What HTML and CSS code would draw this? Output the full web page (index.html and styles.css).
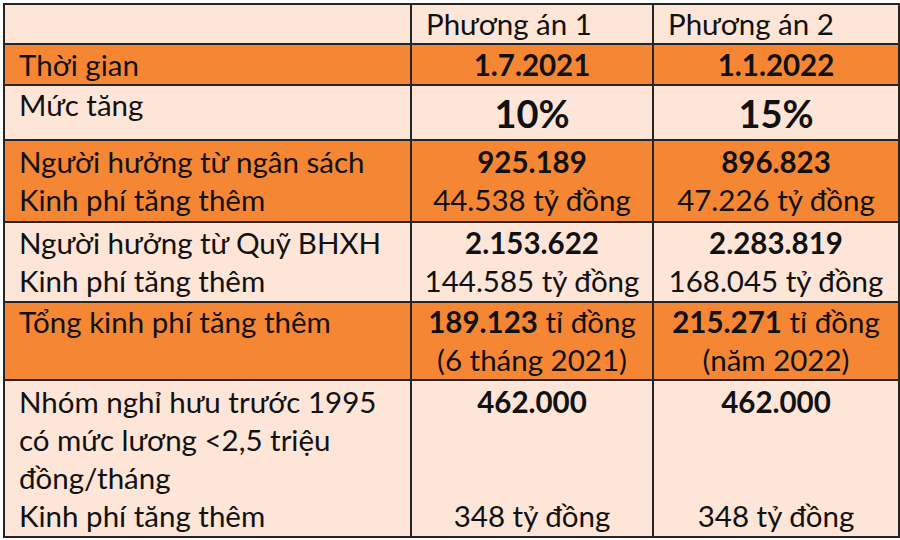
FILE: index.html
```html
<!DOCTYPE html>
<html lang="vi">
<head>
<meta charset="utf-8">
<link rel="stylesheet" href="styles.css">
</head>
<body>
<table class="plan">
  <colgroup><col class="c1"><col class="c2"><col class="c3"></colgroup>
  <tr class="light h-head">
    <td></td><td class="head">Phương án 1</td><td class="head">Phương án 2</td>
  </tr>
  <tr class="orange h-time">
    <td>Thời gian</td><td class="num b">1.7.2021</td><td class="num b">1.1.2022</td>
  </tr>
  <tr class="light h-rate">
    <td class="top">Mức tăng</td><td class="num big">10%</td><td class="num big">15%</td>
  </tr>
  <tr class="orange h-two">
    <td>Người hưởng từ ngân sách<br>Kinh phí tăng thêm</td>
    <td class="num"><b>925.189</b><br>44.538 tỷ đồng</td>
    <td class="num"><b>896.823</b><br>47.226 tỷ đồng</td>
  </tr>
  <tr class="light h-two2">
    <td>Người hưởng từ Quỹ BHXH<br>Kinh phí tăng thêm</td>
    <td class="num"><b>2.153.622</b><br>144.585 tỷ đồng</td>
    <td class="num"><b>2.283.819</b><br>168.045 tỷ đồng</td>
  </tr>
  <tr class="orange h-total">
    <td class="top">Tổng kinh phí tăng thêm</td>
    <td class="num"><b>189.123</b> tỉ đồng<br>(6 tháng 2021)</td>
    <td class="num"><b>215.271</b> tỉ đồng<br>(năm 2022)</td>
  </tr>
  <tr class="light h-last">
    <td>Nhóm nghỉ hưu trước 1995<br>có mức lương &lt;2,5 triệu<br>đồng/tháng<br>Kinh phí tăng thêm</td>
    <td class="num"><b>462.000</b><br>&nbsp;<br>&nbsp;<br>348 tỷ đồng</td>
    <td class="num"><b>462.000</b><br>&nbsp;<br>&nbsp;<br>348 tỷ đồng</td>
  </tr>
</table>
</body>
</html>
```
FILE: styles.css
```css
html, body {
  margin: 0;
  padding: 0;
  background: #ffffff;
}
body {
  padding: 3px 0 0 3px;
  font-family: Lato, "Noto Sans", sans-serif;
  color: #111111;
}
.plan {
  border-collapse: collapse;
  table-layout: fixed;
  width: 895px;
}
.c1 { width: 407px; }
.c2 { width: 242px; }
.c3 { width: 246px; }
.plan td {
  border: 2px solid #262626;
  font-size: 29.5px;
  line-height: 38px;
  padding: 0 0 0 14px;
  vertical-align: middle;
  white-space: nowrap;
}
.plan td.num {
  text-align: center;
  padding: 0;
}
.plan td.head {
  padding-left: 14px;
  text-align: left;
}
.plan td.top { vertical-align: top; }
.light td { background: #fde5d8; }
.orange td { background: #f58634; }
.b, .plan b { font-weight: 700; }
.big {
  font-size: 38px !important;
  font-weight: 700;
}
.h-head td { height: 38px; }
.h-time td { height: 39px; }
.h-rate td { height: 53px; }
.h-two td { height: 80px; }
.h-two2 td { height: 78px; }
.h-total td { height: 76px; vertical-align: top; }
.h-last td { height: 155px; }
```
